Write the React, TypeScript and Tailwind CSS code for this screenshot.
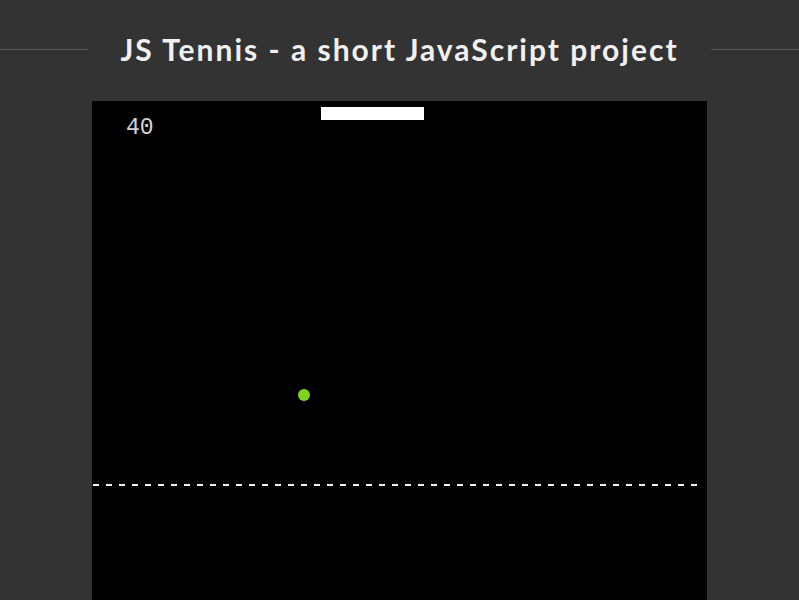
import React from "react";

const Court: React.FC = () => {
  return (
    <svg width="615" height="520" viewBox="0 0 615 520" className="block">
      <rect x="229" y="6" width="103" height="13" fill="#ffffff" />
      <text
        x="34"
        y="33"
        fill="#d4d4d4"
        fontSize="23"
        fontFamily="'Liberation Mono', monospace"
      >
        40
      </text>
      <circle cx="212" cy="294" r="6" fill="#7ed321" />
      <line
        x1="1"
        y1="384"
        x2="612"
        y2="384"
        stroke="#f2f2f2"
        strokeWidth="2"
        strokeDasharray="6 7"
      />
    </svg>
  );
};

export default function App() {
  return (
    <div className="min-h-[600px] bg-[#333333] overflow-hidden">
      <div className="flex items-center gap-8 pt-[29px]">
        <div className="h-px flex-1 bg-[#555555]" />
        <h1 className="text-[30px] leading-[40px] font-bold tracking-[2px] text-[#f0f0f0] font-['Lato','Noto_Sans',sans-serif] whitespace-nowrap">
          JS Tennis - a short JavaScript project
        </h1>
        <div className="h-px flex-1 bg-[#555555]" />
      </div>
      <div className="mx-auto mt-8 w-[615px] bg-black">
        <Court />
      </div>
    </div>
  );
}
